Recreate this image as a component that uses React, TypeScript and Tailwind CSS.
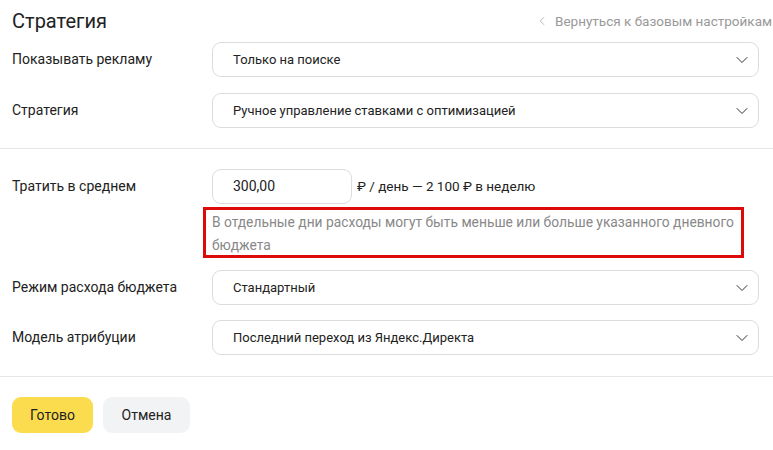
import { ChevronDown, ChevronLeft } from 'lucide-react';

function Select({ value }: { value: string }) {
  return (
    <div className="flex items-center justify-between w-[547px] h-[35px] rounded-[9px] border border-[#dcdcdc] bg-white pl-[20px] pr-[6px] text-[13px] text-[#222]">
      <span>{value}</span>
      <ChevronDown size={20} strokeWidth={1.2} className="text-[#333]" />
    </div>
  );
}

function Row({ label, children }: { label: string; children: React.ReactNode }) {
  return (
    <div className="flex items-center px-[12px]">
      <div className="w-[200px] text-[14px] text-[#222]">{label}</div>
      {children}
    </div>
  );
}

export default function App() {
  return (
    <div className="w-[773px] h-[450px] bg-white overflow-hidden" style={{ fontFamily: 'Roboto, sans-serif' }}>
      <div className="flex items-center justify-between pl-[12px] pr-[1px] pt-[4px] h-[38px]">
        <h1 className="text-[20px] text-[#222]">Стратегия</h1>
        <div className="flex items-center gap-[6px] text-[13.5px] text-[#999]">
          <ChevronLeft size={14} strokeWidth={1.5} className="text-[#aaa]" />
          <span>Вернуться к базовым настройкам</span>
        </div>
      </div>

      <div className="flex flex-col gap-[16px] pt-[4px]">
        <Row label="Показывать рекламу">
          <Select value="Только на поиске" />
        </Row>
        <Row label="Стратегия">
          <Select value="Ручное управление ставками с оптимизацией" />
        </Row>
      </div>

      <div className="h-px bg-[#e6e6e6] mt-[20px]" />

      <div className="pt-[20px] px-[12px]">
        <div className="flex items-center">
          <div className="w-[200px] text-[14px] text-[#222]">Тратить в среднем</div>
          <div className="w-[140px] h-[35px] rounded-[9px] border border-[#dcdcdc] flex items-center pl-[20px] text-[14px] text-[#222]">
            300,00
          </div>
          <span className="ml-[5px] text-[13.5px] text-[#222]">₽ / день — 2 100 ₽ в неделю</span>
        </div>
        <div className="ml-[191px] mt-[3px] w-[541px] h-[51px] border-[3px] border-[#dd0a0a] pl-[6px] pt-[1px] text-[13.8px] leading-[23px] text-[#888]">
          В отдельные дни расходы могут быть меньше или больше указанного дневного бюджета
        </div>
      </div>

      <div className="flex flex-col gap-[15px] pt-[12px]">
        <Row label="Режим расхода бюджета">
          <Select value="Стандартный" />
        </Row>
        <Row label="Модель атрибуции">
          <Select value="Последний переход из Яндекс.Директа" />
        </Row>
      </div>

      <div className="h-px bg-[#e6e6e6] mt-[21px]" />

      <div className="flex gap-[10px] px-[12px] pt-[20px]">
        <button className="w-[81px] h-[36px] rounded-[9px] bg-[#fcdc4f] text-[14px] text-[#222]">Готово</button>
        <button className="w-[87px] h-[36px] rounded-[9px] bg-[#f2f3f5] text-[14px] text-[#222]">Отмена</button>
      </div>
    </div>
  );
}
